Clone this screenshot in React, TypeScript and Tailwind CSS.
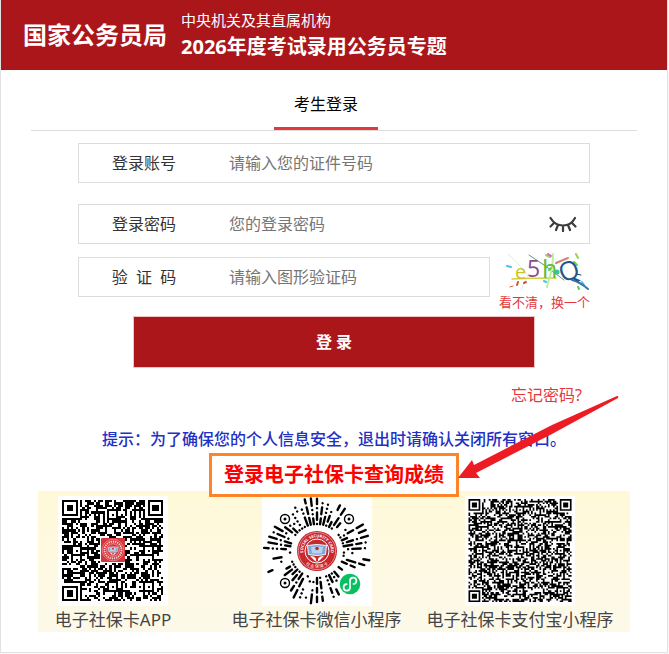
import { useState } from 'react'

const RED = '#c9282d'

// small seeded generator so the codes look the same on every render
function seeded(seed: number) {
  let s = seed
  return () => {
    s = (s * 1664525 + 1013904223) % 4294967296
    return s / 4294967296
  }
}

function buildModules(size: number, align: number[], seed: number, hole: number) {
  const rand = seeded(seed)
  const grid = Array.from({ length: size }, () => Array.from({ length: size }, () => rand() > 0.46))

  const stamp = (cx: number, cy: number, r: number) => {
    for (let y = -r; y <= r; y++) {
      for (let x = -r; x <= r; x++) {
        const px = cx + x
        const py = cy + y
        if (px < 0 || py < 0 || px >= size || py >= size) continue
        const d = Math.max(Math.abs(x), Math.abs(y))
        grid[py][px] = r === 4 ? d <= 1 || d === 3 : d !== 1
      }
    }
  }

  for (let i = 8; i < size - 8; i++) {
    grid[6][i] = i % 2 === 0
    grid[i][6] = i % 2 === 0
  }
  for (const y of align) for (const x of align) stamp(x, y, 2)
  // blank out the corners before the finder marks go in
  for (const [ox, oy] of [[0, 0], [size - 8, 0], [0, size - 8]]) {
    for (let y = 0; y < 8; y++) for (let x = 0; x < 8; x++) grid[oy + y][ox + x] = false
  }
  stamp(3, 3, 4)
  stamp(size - 4, 3, 4)
  stamp(3, size - 4, 4)

  const mid = (size - 1) / 2
  for (let y = 0; y < size; y++) {
    for (let x = 0; x < size; x++) {
      if (Math.abs(x - mid) < hole && Math.abs(y - mid) < hole) grid[y][x] = false
    }
  }

  let d = ''
  grid.forEach((row, y) => row.forEach((on, x) => { if (on) d += `M${x} ${y}h1v1h-1z` }))
  return d
}

const appCode = buildModules(45, [6, 22, 38], 77, 6)
const alipayCode = buildModules(61, [6, 30, 54], 2026, 0)

function buildRays() {
  const rand = seeded(58)
  const marks = [[-32, -32], [32, -32], [-32, 32], [33, 33]]
  let d = ''
  for (let i = 0; i < 54; i++) {
    const a = ((i + 0.5) / 54) * Math.PI * 2
    const end = 46 + rand() * 8
    let r = 27
    while (r < end) {
      const roll = rand()
      const len = roll > 0.5 ? 0 : 4 + rand() * 5
      const to = Math.min(r + len, 53)
      const free = marks.every(([mx, my], n) => {
        const limit = n === 3 ? 13 : 7
        return [r, (r + to) / 2, to].every(v => Math.hypot(Math.cos(a) * v - mx, Math.sin(a) * v - my) > limit)
      })
      if (free && rand() > 0.24) {
        d += `M${(Math.cos(a) * r).toFixed(1)} ${(Math.sin(a) * r).toFixed(1)}L${(Math.cos(a) * to + 0.01).toFixed(2)} ${(Math.sin(a) * to).toFixed(2)}`
      }
      r = to + 4.2
    }
  }
  return d
}

const rays = buildRays()

function Screen() {
  return (
    <g>
      <path d="M-7 5Q-2 5-1 8V11H1V8Q2 5 7 5L3 9Q0 12-3 9Z" fill="#fff" />
      <path d="M-9.500-5.500Q0-7.500 9.500-5.500L8.500 3.500Q0 5.500-8.500 3.500Z" fill="#7da9d8" stroke="#eef5fb" strokeWidth="1" />
      <path d="M-6-4Q0-5 6-4L5 2Q0 3-5 2Z" fill="#b5d2ee" />
      <circle cy="-2.500" r="1.800" fill={RED} />
    </g>
  )
}

function Emblem() {
  return (
    <g>
      <circle r="20" fill={RED} />
      <circle r="18.600" fill="none" stroke="#f0c0c0" strokeWidth="0.600" />
      <circle r="12" fill="none" stroke="#fff" strokeWidth="1" />
      <path id="ring-top" d="M-13.600 3A13.900 13.900 0 1 1 13.600 3" fill="none" />
      <text fontSize="4" fontWeight="bold" fill="#fff" aria-hidden="true">
        <textPath href="#ring-top" startOffset="50%" textAnchor="middle">SOCIAL SECURITY CARD</textPath>
      </text>
      <path id="ring-bottom" d="M-14 10A17.200 17.200 0 0 0 14 10" fill="none" />
      <text fontSize="4" fill="#fff" aria-hidden="true">
        <textPath href="#ring-bottom" startOffset="50%" textAnchor="middle">社 会 保 障 卡</textPath>
      </text>
      <Screen />
    </g>
  )
}

function AppQr() {
  return (
    <svg viewBox="0 0 110 110" className="h-[110px] w-[110px] shrink-0 bg-white" role="img" aria-label="电子社保卡APP">
      <path d={appCode} transform="translate(4 4) scale(2.25)" shapeRendering="crispEdges" />
      <rect x="43" y="42" width="24" height="24" rx="1" fill="#d5353b" />
      <g transform="translate(55 54)">
        <circle r="10.800" fill="none" stroke="#ee9c9e" strokeWidth="0.700" />
        <circle r="8.500" fill="none" stroke="#f6d2d2" strokeWidth="1.800" strokeDasharray="1.400 0.800" />
        <circle r="6.300" fill="none" stroke="#f3c0c0" strokeWidth="0.700" />
        <g transform="scale(0.500)"><Screen /></g>
      </g>
    </svg>
  )
}

function WechatCode() {
  return (
    <svg viewBox="-55 -55 110 110" className="h-[110px] w-[110px] shrink-0 bg-white" role="img" aria-label="电子社保卡微信小程序">
      <path d={rays} stroke="#000" strokeWidth="2.400" strokeLinecap="round" fill="none" />
      {[[-32, -32], [32, -32], [-32, 32]].map(([x, y]) => (
        <g key={`${x},${y}`}>
          <circle cx={x} cy={y} r="4.500" fill="#fff" stroke="#000" strokeWidth="1.400" />
          <circle cx={x} cy={y} r="1.500" />
        </g>
      ))}
      <Emblem />
      <circle cx="33" cy="33" r="10.300" fill="#07c160" />
      <path d="M29.600 33.200A3.200 3.200 0 1 0 33 36.200V30A3.200 3.200 0 1 1 36.400 33" fill="none" stroke="#fff" strokeWidth="1.700" strokeLinecap="round" />
    </svg>
  )
}

function AlipayQr() {
  return (
    <svg viewBox="0 0 110 110" className="h-[110px] w-[110px] shrink-0 bg-white" role="img" aria-label="电子社保卡支付宝小程序">
      <path d={alipayCode} transform="translate(3.500 3) scale(1.690)" />
    </svg>
  )
}

function Captcha() {
  return (
    <svg viewBox="0 0 84 40" className="h-10 w-[84px]" role="img" aria-label="图形验证码">
      <g fill="none" strokeLinecap="round">
        <path d="M2 2Q12 10 22 24Q18 30 15 38" stroke="#d8f0dc" />
        <path d="M23 3L38 13L58 28" stroke="#5b9a76" />
        <path d="M6 27Q30 26 50 26" stroke="#d2cf3a" strokeWidth="1.500" />
        <path d="M47 2Q47 14 44 24T41 35" stroke="#b9f09a" strokeWidth="2" />
        <path d="M50 11L62 6" stroke="#cf8478" strokeWidth="2" />
        <path d="M70 2l2 4M40 3l4 2" stroke="#9ad25a" strokeWidth="2" />
        <path d="M1 14l4 1M38 29l2 1M76 30l2 3" stroke="#4cc3e8" strokeWidth="2" />
        <path d="M42 2l3 2" stroke="#e558d2" strokeWidth="2" />
        <path d="M11 33l1-3M18 31l2-1" stroke="#d8502c" strokeWidth="2" />
        <path d="M68 10l3 3M72 35l1 2M45 16l-2 2" stroke="#55d83c" strokeWidth="2" />
        <path d="M4 35l3-1" stroke="#f05038" />
        <path d="M70 22l5 1" stroke="#27357a" />
        {/* long tail of the last letter */}
        <path d="M66 28Q74 30 82 37" stroke="#3f72a8" strokeWidth="2" />
      </g>
      <g fontFamily="Open Sans, sans-serif" aria-hidden="true">
        <text x="9" y="27" fontSize="20" fill="#c8c422">e</text>
        <text x="21" y="25" fontSize="23" fill="#8d4a91">5</text>
        <text x="36" y="26" fontSize="25" fill="#62b93b">h</text>
        <text x="53" y="28" fontSize="26" fill="#22558e" transform="rotate(-22 63 19)">Q</text>
      </g>
      <circle cx="51" cy="20" r="2.500" fill="#2fc7a0" />
    </svg>
  )
}

const codes = [
  { name: '电子社保卡APP', Code: AppQr },
  { name: '电子社保卡微信小程序', Code: WechatCode },
  { name: '电子社保卡支付宝小程序', Code: AlipayQr },
]

const labelClass = 'w-[130px] shrink-0 text-center text-[#333333]'
const inputClass = 'h-full min-w-0 flex-1 px-5 text-[#333333] outline-none placeholder:text-[#757575]'
const rowClass = 'flex h-10 items-center border border-[#dcdcdc]'

export default function App() {
  const [showPassword, setShowPassword] = useState(false)

  return (
    <div lang="zh-CN" className="min-h-screen bg-[#f8f8f8] pr-px text-base leading-6 font-['Noto_Sans','Noto_Sans_CJK_SC',sans-serif]">
      <div className="border-x border-b border-[#e2e2e2] bg-white">
        {/* HEADER */}
        <header className="flex h-[70px] items-center gap-3.5 bg-[#ab161b] px-[22px] text-white">
          <h1 className="shrink-0 text-2xl font-bold">国家公务员局</h1>
          <div>
            <p className="text-[15px] leading-6">中央机关及其直属机构</p>
            <p className="text-xl leading-[30px] font-bold">2026年度考试录用公务员专题</p>
          </div>
        </header>

        {/* TABS */}
        <nav className="mx-[30px] flex justify-center border-b border-[#dcdcdc] pt-5 pr-4">
          <button type="button" className="h-10 w-[104px] border-b-3 border-[#e4393c] pb-2.5 text-black">考生登录</button>
        </nav>

        {/* LOGIN FORM */}
        <form className="px-[77px] pt-3" onSubmit={e => e.preventDefault()}>
          <div className={rowClass}>
            <label htmlFor="account" className={labelClass}>登录账号</label>
            <input id="account" type="text" placeholder="请输入您的证件号码" className={inputClass} />
          </div>

          <div className={`${rowClass} mt-[21px]`}>
            <label htmlFor="password" className={labelClass}>登录密码</label>
            <input id="password" type={showPassword ? 'text' : 'password'} placeholder="您的登录密码" className={inputClass} />
            <button type="button" aria-label="显示密码" className="mr-3 shrink-0" onClick={() => setShowPassword(!showPassword)}>
              <svg viewBox="0 0 28 16" className="h-4 w-7" fill="none" stroke="#3c3c3c" strokeWidth="2.200" strokeLinecap="round">
                <path d="M1.500 2Q6 9.500 14 9.500T26 2M5 7L1.500 10.500M9 9L7 14M14 9.500V15M19 9L21 14M23 7L26.500 10.500" />
              </svg>
            </button>
          </div>

          <div className="mt-2 flex gap-2">
            <div className={`${rowClass} mt-[5px] min-w-0 flex-1`}>
              <label htmlFor="captcha" className={labelClass}>验&nbsp;&nbsp;证&nbsp;&nbsp;码</label>
              <input id="captcha" type="text" placeholder="请输入图形验证码" className={inputClass} />
            </div>
            <a href="#captcha" className="flex w-[92px] shrink-0 flex-col items-end text-[13px] leading-5 text-[#e4393c]">
              <Captcha />
              看不清，换一个
            </a>
          </div>

          <button type="submit" className="mx-auto mt-1 block h-[52px] w-[402px] max-w-full border border-[#efc4c6] bg-[#ab161b] font-bold text-white">
            登 录
          </button>

          <div className="mt-[15px] pr-2 text-right">
            <a href="#forgot" className="text-[#e4393c]">忘记密码?</a>
          </div>
        </form>

        <p className="mt-5 text-center font-medium text-[#2230c4]">提示：为了确保您的个人信息安全，退出时请确认关闭所有窗口。</p>

        {/* QR CODES */}
        <section className="relative mx-[37px] mt-10 mb-5 bg-linear-to-b from-[#fff9d8] to-[#fdf9ea]">
          <div className="flex justify-between pt-[5px] pr-[55px] pl-5">
            {codes.map(({ name, Code }) => (
              <figure key={name} className="flex w-[110px] flex-col items-center">
                <Code />
                <figcaption className="mt-0.5 text-[17px] leading-6 whitespace-nowrap text-[#444444]">{name}</figcaption>
              </figure>
            ))}
          </div>

          <div className="absolute -top-[38px] left-1/2 flex h-11 w-[250px] -translate-x-1/2 items-center justify-center border-3 border-[#ff8427] bg-white text-xl font-bold whitespace-nowrap text-[#ff0000]">
            登录电子社保卡查询成绩
            <svg viewBox="0 0 164 87" className="pointer-events-none absolute bottom-3 left-full h-[87px] w-[164px]" fill="#ed1c24" aria-hidden="true">
              <path d="M2 83L16 65L18 70L96 30L161 1Q163 1 162 3L96 39L20 78L24 83Z" />
            </svg>
          </div>
        </section>
      </div>
    </div>
  )
}
